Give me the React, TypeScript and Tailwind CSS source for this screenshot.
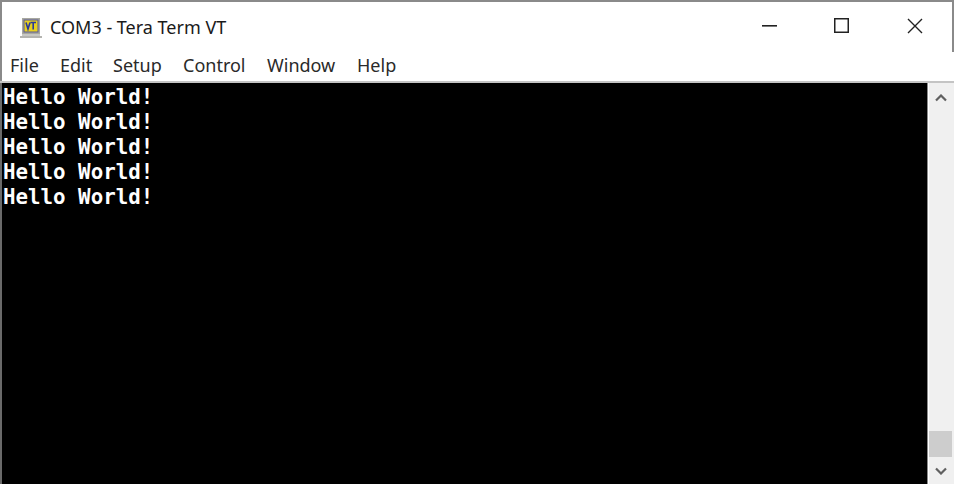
const menus = [
  { label: "File", width: "w-[50px]" },
  { label: "Edit", width: "w-[53px]" },
  { label: "Setup", width: "w-[70px]" },
  { label: "Control", width: "w-[84px]" },
  { label: "Window", width: "w-[90px]" },
  { label: "Help", width: "w-[50px]" },
];

const lines = ["Hello World!", "Hello World!", "Hello World!", "Hello World!", "Hello World!"];

function AppIcon() {
  return (
    <svg width="22" height="22" viewBox="0 0 22 22" className="shrink-0">
      <rect x="2" y="1" width="18" height="16" fill="#a8a8a0" />
      <rect x="4" y="3" width="14" height="12" fill="#e8d020" stroke="#5a5a90" strokeWidth="1" />
      <path d="M6 5.5 L8 12 L10 5.5 M10.5 5.5 H16 M13.2 5.5 V12.5" fill="none" stroke="#2a3a9a" strokeWidth="1.6" />
      <rect x="2" y="17" width="18" height="2" fill="#c8c8c4" />
      <rect x="0" y="19" width="22" height="2" fill="#b4b4b0" />
    </svg>
  );
}

export default function App() {
  return (
    <div className="flex h-[484px] w-[954px] flex-col overflow-hidden bg-white text-[#1a1a1a]">
      <div className="flex h-[81px] flex-col border-t-2 border-l-2 border-[#8a8a8a]">
        <div className="flex h-[50px] border-r-2 border-[#8a8a8a]">
          <div className="flex flex-1 items-center gap-[8px] pt-[1px] pl-[18px]">
            <AppIcon />
            <span className="font-['Noto_Sans',sans-serif] text-[18px]">COM3 - Tera Term VT</span>
          </div>
          <div className="flex w-[222px] items-center pb-[3px]">
            <div className="flex w-[78px] justify-center">
              <svg width="15" height="2" viewBox="0 0 15 2">
                <rect width="15" height="1.6" fill="#222" />
              </svg>
            </div>
            <div className="flex w-[66px] justify-center">
              <svg width="15" height="15" viewBox="0 0 15 15">
                <rect x="0.75" y="0.75" width="13.5" height="13.5" fill="none" stroke="#222" strokeWidth="1.5" />
              </svg>
            </div>
            <div className="flex w-[78px] justify-center pl-[4px]">
              <svg width="16" height="16" viewBox="0 0 16 16">
                <path d="M1 1 L15 15 M15 1 L1 15" fill="none" stroke="#222" strokeWidth="1.4" />
              </svg>
            </div>
          </div>
        </div>
        <div className="-mt-[3px] flex flex-1 items-center pl-[8px] font-['Noto_Sans',sans-serif] text-[18px] text-[#2a2a2a]">
          {menus.map((m) => (
            <span key={m.label} className={m.width}>
              {m.label}
            </span>
          ))}
        </div>
      </div>
      <div className="h-[2px] bg-[#c4c4c4]" />
      <div className="flex min-h-0 flex-1 border-l-2 border-[#6a6a6a]">
        <div className="flex-1 bg-black pt-[2px] pl-[1px] font-['DejaVu_Sans_Mono',monospace] text-[20.8px] leading-[25px] font-bold text-white">
          {lines.map((line, i) => (
            <div key={i} className="whitespace-pre">
              {line}
            </div>
          ))}
        </div>
        <div className="flex w-[27px] flex-col items-stretch border-l border-[#8a8a8a] bg-white pl-[1px]">
          <div className="flex flex-1 flex-col bg-[#f0f0f0] pr-[2px]">
            <div className="flex h-[30px] items-center justify-center">
              <svg width="12" height="8" viewBox="0 0 12 8">
                <path d="M1 6.5 L6 1.5 L11 6.5" fill="none" stroke="#606060" strokeWidth="2.2" />
              </svg>
            </div>
            <div className="flex-1" />
            <div className="h-[26px] w-full bg-[#cdcdcd]" />
            <div className="flex h-[27px] items-center justify-center">
              <svg width="12" height="8" viewBox="0 0 12 8">
                <path d="M1 1.5 L6 6.5 L11 1.5" fill="none" stroke="#606060" strokeWidth="2.2" />
              </svg>
            </div>
          </div>
        </div>
      </div>
    </div>
  );
}
